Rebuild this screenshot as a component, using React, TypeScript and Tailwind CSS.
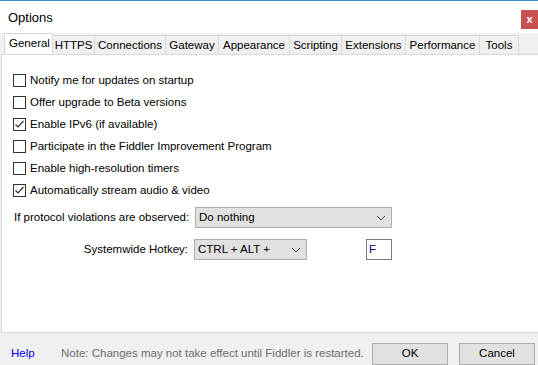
import React from "react";

const tabs = ["General", "HTTPS", "Connections", "Gateway", "Appearance", "Scripting", "Extensions", "Performance", "Tools"];
const tabWidths = [49, 42, 71, 53, 71, 52, 64, 74, 39];

const options: [string, boolean][] = [
  ["Notify me for updates on startup", false],
  ["Offer upgrade to Beta versions", false],
  ["Enable IPv6 (if available)", true],
  ["Participate in the Fiddler Improvement Program", false],
  ["Enable high-resolution timers", false],
  ["Automatically stream audio & video", true],
];

function Check({ checked }: { checked: boolean }) {
  return (
    <div className="w-[13px] h-[13px] border border-[#333333] bg-white flex items-center justify-center shrink-0">
      {checked && (
        <svg width="11" height="11" viewBox="0 0 11 11">
          <path d="M1.5 5.5 L4 8 L9.5 2" stroke="#333333" strokeWidth="1.2" fill="none" />
        </svg>
      )}
    </div>
  );
}

function Chevron() {
  return (
    <svg width="10" height="6" viewBox="0 0 10 6">
      <path d="M1 1 L5 5 L9 1" stroke="#444444" strokeWidth="1" fill="none" />
    </svg>
  );
}

export default function App() {
  return (
    <div
      className="w-[538px] h-[365px] bg-[#f0f0f0] flex flex-col overflow-hidden text-[11.5px] text-black border-t border-[#3c8fd6] whitespace-nowrap"
      style={{ fontFamily: '"Liberation Sans", Arial, sans-serif' }}
    >
      <div className="h-[32px] bg-white flex items-start justify-between shrink-0">
        <div className="pl-[8px] pt-[9px] text-[13px] leading-[16px]">Options</div>
        <div className="mt-[9px] w-[17px] h-[19px] bg-[#c75050] text-white font-bold text-[11px] flex items-center justify-center">
          x
        </div>
      </div>
      <div className="flex items-end pl-[4px] h-[21px] shrink-0 relative z-10">
        {tabs.map((t, i) =>
          i === 0 ? (
            <div
              key={t}
              style={{ width: tabWidths[i] }}
              className="h-[21px] bg-white border border-b-0 border-[#d9d9d9] flex items-start pt-[2px] pl-[4px] leading-[15px]"
            >
              {t}
            </div>
          ) : (
            <div
              key={t}
              style={{ width: tabWidths[i] }}
              className="h-[19px] bg-[#f0f0f0] border border-l-0 border-b-0 border-[#d9d9d9] flex items-center justify-center leading-[15px]"
            >
              {t}
            </div>
          )
        )}
      </div>
      <div className="ml-[1px] h-[279px] bg-white border-l border-t border-b border-[#d9d9d9] shrink-0 flex flex-col pt-[19px]">
        <div className="flex flex-col gap-[9px] pl-[11px]">
          {options.map(([label, c]) => (
            <div key={label} className="flex items-center gap-[4px] h-[13px]">
              <Check checked={c} />
              <span className="leading-[13px]">{label}</span>
            </div>
          ))}
        </div>
        <div className="flex items-center mt-[10px] pl-[12px]">
          <span className="w-[181px]">If protocol violations are observed:</span>
          <div className="w-[197px] h-[21px] bg-[#e1e1e1] border border-[#adadad] flex items-center justify-between pl-[3px] pr-[5px]">
            <span>Do nothing</span>
            <Chevron />
          </div>
        </div>
        <div className="flex items-center mt-[11px]">
          <span className="w-[186px] text-right">Systemwide Hotkey:</span>
          <div className="ml-[6px] w-[113px] h-[21px] bg-[#e1e1e1] border border-[#adadad] flex items-center justify-between pl-[3px] pr-[5px]">
            <span>CTRL + ALT +</span>
            <Chevron />
          </div>
          <div className="ml-[59px] w-[26px] h-[21px] bg-white border border-[#7a7a7a] flex items-center pl-[2px] text-[#000080]">
            F
          </div>
        </div>
      </div>
      <div className="flex items-center pt-[10px]">
        <span className="pl-[11px] w-[61px] text-[#0000ff]">Help</span>
        <span className="text-[#6d6d6d] w-[311px]">Note: Changes may not take effect until Fiddler is restarted.</span>
        <div className="w-[76px] h-[22px] bg-[#e1e1e1] border border-[#adadad] flex items-center justify-center">OK</div>
        <div className="ml-[11px] w-[76px] h-[22px] bg-[#e1e1e1] border border-[#adadad] flex items-center justify-center">Cancel</div>
      </div>
    </div>
  );
}
